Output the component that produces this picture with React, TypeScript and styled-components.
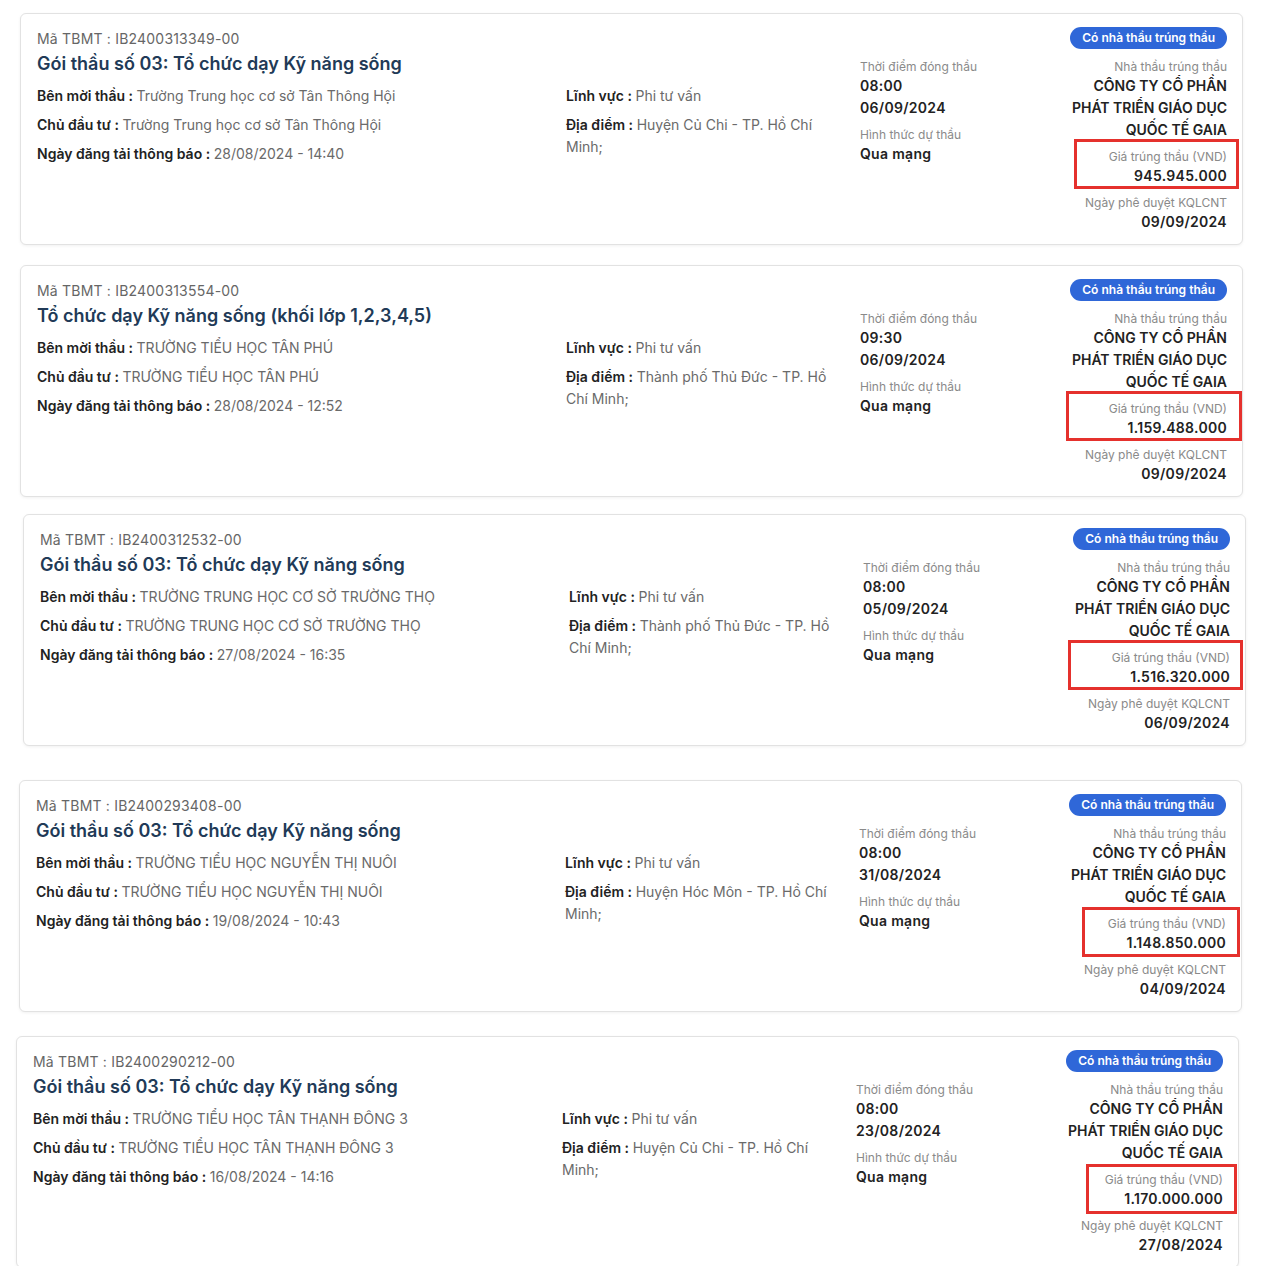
import styled, { createGlobalStyle } from 'styled-components';

const GlobalStyle = createGlobalStyle`
  body {
    margin: 0;
    background: #ffffff;
    font-family: Inter, "Noto Sans", sans-serif;
    color: #222;
  }
`;

type Tender = {
  code: string;
  title: string;
  inviter: string;
  investor: string;
  posted: string;
  field: string;
  place: string;
  closeTime: string;
  closeDate: string;
  price: string;
  approved: string;
  top: number;
  left: number;
  mark: { top: number; right: number; bottom: number; left: number };
};

const tenders: Tender[] = [
  {
    code: 'IB2400313349-00',
    title: 'Gói thầu số 03: Tổ chức dạy Kỹ năng sống',
    inviter: 'Trường Trung học cơ sở Tân Thông Hội',
    investor: 'Trường Trung học cơ sở Tân Thông Hội',
    posted: '28/08/2024 - 14:40',
    field: 'Phi tư vấn',
    place: 'Huyện Củ Chi - TP. Hồ Chí Minh;',
    closeTime: '08:00',
    closeDate: '06/09/2024',
    price: '945.945.000',
    approved: '09/09/2024',
    top: 13,
    left: 20,
    mark: { top: -8, right: -12, bottom: -2, left: 15 },
  },
  {
    code: 'IB2400313554-00',
    title: 'Tổ chức dạy Kỹ năng sống (khối lớp 1,2,3,4,5)',
    inviter: 'TRƯỜNG TIỂU HỌC TÂN PHÚ',
    investor: 'TRƯỜNG TIỂU HỌC TÂN PHÚ',
    posted: '28/08/2024 - 12:52',
    field: 'Phi tư vấn',
    place: 'Thành phố Thủ Đức - TP. Hồ Chí Minh;',
    closeTime: '09:30',
    closeDate: '06/09/2024',
    price: '1.159.488.000',
    approved: '09/09/2024',
    top: 20,
    left: 20,
    mark: { top: -8, right: -15, bottom: -2, left: 7 },
  },
  {
    code: 'IB2400312532-00',
    title: 'Gói thầu số 03: Tổ chức dạy Kỹ năng sống',
    inviter: 'TRƯỜNG TRUNG HỌC CƠ SỞ TRƯỜNG THỌ',
    investor: 'TRƯỜNG TRUNG HỌC CƠ SỞ TRƯỜNG THỌ',
    posted: '27/08/2024 - 16:35',
    field: 'Phi tư vấn',
    place: 'Thành phố Thủ Đức - TP. Hồ Chí Minh;',
    closeTime: '08:00',
    closeDate: '05/09/2024',
    price: '1.516.320.000',
    approved: '06/09/2024',
    top: 17,
    left: 23,
    mark: { top: -8, right: -13, bottom: -2, left: 6 },
  },
  {
    code: 'IB2400293408-00',
    title: 'Gói thầu số 03: Tổ chức dạy Kỹ năng sống',
    inviter: 'TRƯỜNG TIỂU HỌC NGUYỄN THỊ NUÔI',
    investor: 'TRƯỜNG TIỂU HỌC NGUYỄN THỊ NUÔI',
    posted: '19/08/2024 - 10:43',
    field: 'Phi tư vấn',
    place: 'Huyện Hóc Môn - TP. Hồ Chí Minh;',
    closeTime: '08:00',
    closeDate: '31/08/2024',
    price: '1.148.850.000',
    approved: '04/09/2024',
    top: 34,
    left: 19,
    mark: { top: -7, right: -14, bottom: -3, left: 24 },
  },
  {
    code: 'IB2400290212-00',
    title: 'Gói thầu số 03: Tổ chức dạy Kỹ năng sống',
    inviter: 'TRƯỜNG TIỂU HỌC TÂN THẠNH ĐÔNG 3',
    investor: 'TRƯỜNG TIỂU HỌC TÂN THẠNH ĐÔNG 3',
    posted: '16/08/2024 - 14:16',
    field: 'Phi tư vấn',
    place: 'Huyện Củ Chi - TP. Hồ Chí Minh;',
    closeTime: '08:00',
    closeDate: '23/08/2024',
    price: '1.170.000.000',
    approved: '27/08/2024',
    top: 24,
    left: 16,
    mark: { top: -6, right: -14, bottom: -4, left: 31 },
  },
];

const Page = styled.div`
  display: flex;
  flex-direction: column;
  width: 1284px;
`;

const Card = styled.div<{ $top: number; $left: number }>`
  display: flex;
  width: 1223px;
  box-sizing: border-box;
  margin-top: ${({ $top }) => $top}px;
  margin-left: ${({ $left }) => $left}px;
  padding: 13px 15px 11px 16px;
  border: 1px solid #e2e2e2;
  border-radius: 6px;
  box-shadow: 0 1px 3px rgba(0, 0, 0, 0.06);
  background: #fff;
`;

const MainInfo = styled.div`
  flex: 1;
  display: flex;
  flex-direction: column;
`;

const Code = styled.div`
  margin-top: 2px;
  font-size: 14px;
  line-height: 20px;
  color: #666;
  letter-spacing: 0.2px;
`;

const Title = styled.div`
  font-size: 18px;
  line-height: 30px;
  font-weight: 600;
  color: #213a57;
`;

const FieldGrid = styled.div`
  display: grid;
  grid-template-columns: 529px 268px;
  margin-top: 6px;
`;

const FieldCol = styled.div`
  display: flex;
  flex-direction: column;
  gap: 7px;
`;

const Field = styled.div`
  font-size: 14px;
  line-height: 22px;
  color: #6a6a6a;
`;

const FieldLabel = styled.span`
  font-weight: 600;
  color: #222;
`;

const SideInfo = styled.div`
  width: 367px;
  display: flex;
  flex-direction: column;
  align-items: flex-end;
`;

const Badge = styled.div`
  height: 22px;
  padding: 0 12px;
  border-radius: 11px;
  background: #2f67d8;
  color: #fff;
  font-size: 12px;
  font-weight: 600;
  line-height: 22px;
  white-space: nowrap;
`;

const SideColumns = styled.div`
  display: flex;
  justify-content: space-between;
  width: 100%;
  margin-top: 8px;
`;

const Column = styled.div<{ $align: 'left' | 'right'; $width: number }>`
  display: flex;
  flex-direction: column;
  gap: 6px;
  width: ${({ $width }) => $width}px;
  text-align: ${({ $align }) => $align};
`;

const Block = styled.div`
  position: relative;
  display: flex;
  flex-direction: column;
`;

const Caption = styled.div`
  margin-top: 1px;
  margin-bottom: -1px;
  font-size: 12px;
  line-height: 18px;
  color: #8a8a8a;
`;

const Value = styled.div`
  font-size: 14px;
  line-height: 22px;
  font-weight: 600;
  color: #222;
  letter-spacing: 0.3px;
`;

const CompanyName = styled(Value)`
  letter-spacing: 0;
`;

const Highlight = styled.div`
  position: absolute;
  border: 3px solid #e5312d;
  pointer-events: none;
`;

const TenderCard = ({ t }: { t: Tender }) => (
  <Card $top={t.top} $left={t.left}>
    <MainInfo>
      <Code>Mã TBMT : {t.code}</Code>
      <Title>{t.title}</Title>
      <FieldGrid>
        <FieldCol>
          <Field>
            <FieldLabel>Bên mời thầu : </FieldLabel>
            {t.inviter}
          </Field>
          <Field>
            <FieldLabel>Chủ đầu tư : </FieldLabel>
            {t.investor}
          </Field>
          <Field>
            <FieldLabel>Ngày đăng tải thông báo : </FieldLabel>
            {t.posted}
          </Field>
        </FieldCol>
        <FieldCol>
          <Field>
            <FieldLabel>Lĩnh vực : </FieldLabel>
            {t.field}
          </Field>
          <Field>
            <FieldLabel>Địa điểm : </FieldLabel>
            {t.place}
          </Field>
        </FieldCol>
      </FieldGrid>
    </MainInfo>

    <SideInfo>
      <Badge>Có nhà thầu trúng thầu</Badge>
      <SideColumns>
        <Column $align="left" $width={180}>
          <Block>
            <Caption>Thời điểm đóng thầu</Caption>
            <Value>{t.closeTime}</Value>
            <Value>{t.closeDate}</Value>
          </Block>
          <Block>
            <Caption>Hình thức dự thầu</Caption>
            <Value>Qua mạng</Value>
          </Block>
        </Column>
        <Column $align="right" $width={168}>
          <Block>
            <Caption>Nhà thầu trúng thầu</Caption>
            <CompanyName>CÔNG TY CỔ PHẦN PHÁT TRIỂN GIÁO DỤC QUỐC TẾ GAIA</CompanyName>
          </Block>
          <Block>
            <Caption>Giá trúng thầu (VND)</Caption>
            <Value>{t.price}</Value>
            <Highlight
              style={{
                top: t.mark.top,
                right: t.mark.right,
                bottom: t.mark.bottom,
                left: t.mark.left,
              }}
            />
          </Block>
          <Block>
            <Caption>Ngày phê duyệt KQLCNT</Caption>
            <Value>{t.approved}</Value>
          </Block>
        </Column>
      </SideColumns>
    </SideInfo>
  </Card>
);

const App = () => (
  <>
    <GlobalStyle />
    <Page>
      {tenders.map((t) => (
        <TenderCard key={t.code + t.top} t={t} />
      ))}
    </Page>
  </>
);

export default App;
